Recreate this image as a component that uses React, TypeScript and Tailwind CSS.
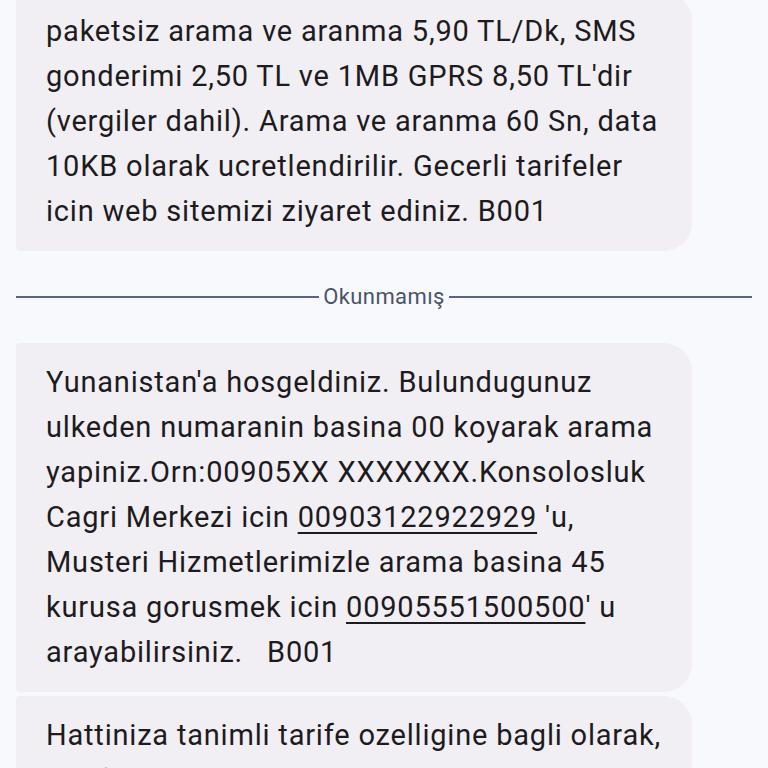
const firstMessage = [
  "paketsiz arama ve aranma 5,90 TL/Dk, SMS",
  "gonderimi 2,50 TL ve 1MB GPRS 8,50 TL'dir",
  "(vergiler dahil). Arama ve aranma 60 Sn, data",
  "10KB olarak ucretlendirilir. Gecerli tarifeler",
  "icin web sitemizi ziyaret ediniz. B001",
];

function Line({ children }: { children: React.ReactNode }) {
  return <span className="block whitespace-nowrap">{children}</span>;
}

function Phone({ number }: { number: string }) {
  return <span className="underline decoration-2 underline-offset-[5px]">{number}</span>;
}

function Bubble({ children }: { children: React.ReactNode }) {
  return (
    <div className="mr-[60px] rounded-l-[4px] rounded-r-[28px] bg-[#f1eff4] px-[30px] py-[17px] text-[29px] leading-[45px] tracking-[0.8px] text-[#1d1b20]">
      {children}
    </div>
  );
}

export default function App() {
  return (
    <div
      className="h-[768px] overflow-hidden bg-[#f8f9fd] px-4"
      style={{ fontFamily: "Roboto, 'Noto Sans', sans-serif" }}
    >
      <div className="-mt-2">
        <Bubble>
          {firstMessage.map((line) => (
            <Line key={line}>{line}</Line>
          ))}
        </Bubble>
      </div>

      <div className="flex h-[92px] items-center gap-1">
        <div className="h-[2px] flex-1 bg-[#5a6385]" />
        <span className="text-[22px] leading-6 tracking-[0.4px] text-[#4a5468]">Okunmamış</span>
        <div className="h-[2px] flex-1 bg-[#5a6385]" />
      </div>

      <div className="flex flex-col gap-[4px]">
        <Bubble>
          <Line>Yunanistan'a hosgeldiniz. Bulundugunuz</Line>
          <Line>ulkeden numaranin basina 00 koyarak arama</Line>
          <Line>yapiniz.Orn:00905XX XXXXXXX.Konsolosluk</Line>
          <Line>
            Cagri Merkezi icin <Phone number="00903122922929" /> 'u,
          </Line>
          <Line>Musteri Hizmetlerimizle arama basina 45</Line>
          <Line>
            kurusa gorusmek icin <Phone number="00905551500500" />' u
          </Line>
          <Line>arayabilirsiniz.&nbsp;&nbsp; B001</Line>
        </Bubble>
        <Bubble>
          <Line>Hattiniza tanimli tarife ozelligine bagli olarak,</Line>
          <Line>Tarifeniz Yurt Disinda gecerli ise</Line>
        </Bubble>
      </div>
    </div>
  );
}
